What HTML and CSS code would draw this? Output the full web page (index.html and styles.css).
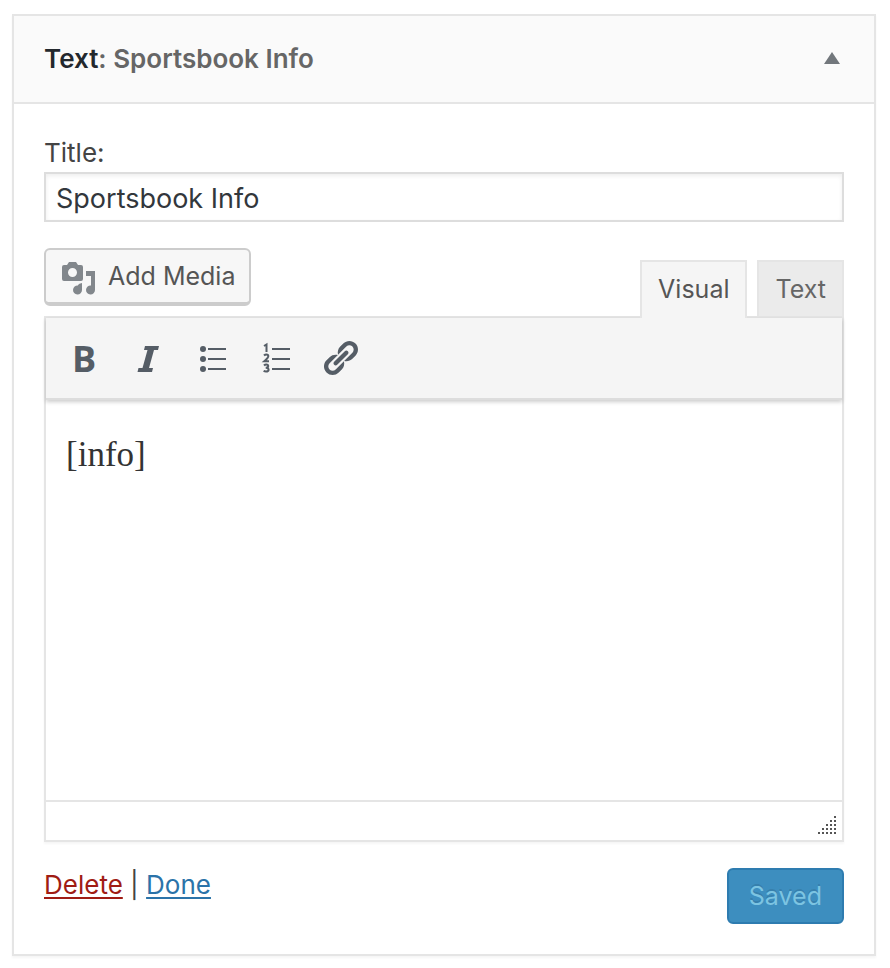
FILE: index.html
```html
<!DOCTYPE html>
<html lang="en">
<head>
<meta charset="utf-8">
<meta name="viewport" content="width=device-width, initial-scale=1">
<title>Text widget</title>
<link rel="stylesheet" href="styles.css">
</head>
<body>
<form class="widget">
  <header class="widget-header">
    <h1 class="widget-title">Text<span class="widget-name">: Sportsbook Info</span></h1>
    <button class="toggle" type="button" aria-label="Collapse widget">
      <svg width="16" height="12" viewBox="0 0 16 12"><path d="M8 0l8 12H0z" fill="currentColor"/></svg>
    </button>
  </header>
  <div class="widget-body">
    <label class="field-label" for="title">Title:</label>
    <input class="field-input" id="title" type="text" value="Sportsbook Info">
    <div class="editor-tools">
      <button class="media-button" type="button">
        <svg width="34" height="40" viewBox="0 -6 34 40" fill="currentColor">
          <path fill-rule="evenodd" d="M2 3h3l2-3h7l2 3h3q2 0 2 2v12q0 2-2 2H2q-2 0-2-2V5q0-2 2-2zM10.500 6a4.500 4.500 0 1 0 0 9 4.500 4.500 0 0 0 0-9z"/>
          <path d="M24 9h9v19a4.500 4.500 0 1 1-4-4.500V14h-5zM16 23q1-1.500 4-2v7a4.500 4.500 0 1 1-4-4.500z"/>
        </svg>
        <span>Add Media</span>
      </button>
      <div class="tabs">
        <button class="tab tab-active" type="button">Visual</button>
        <button class="tab" type="button">Text</button>
      </div>
    </div>
    <div class="editor">
      <div class="toolbar">
        <button class="tool tool-bold" type="button" aria-label="Bold">B</button>
        <button class="tool" type="button" aria-label="Italic">
          <svg width="40" height="40" viewBox="0 0 40 40" fill="currentColor">
            <path d="M17 8h14l-1 4h-4l-5 18h4l-1 4H9.500l1-4h4l5-18h-3.500z"/>
          </svg>
        </button>
        <button class="tool" type="button" aria-label="Bulleted list">
          <svg width="40" height="40" viewBox="0 0 40 40" fill="currentColor">
            <circle cx="11" cy="11" r="3"/><circle cx="11" cy="21" r="3"/><circle cx="11" cy="31" r="3"/>
            <path d="M16 10h18v2H16zM16 20h18v2H16zM16 30h18v2H16z"/>
          </svg>
        </button>
        <button class="tool" type="button" aria-label="Numbered list">
          <svg width="40" height="40" viewBox="0 0 40 40" fill="currentColor">
            <path class="list-marks" d="M8 8l2.500-1.500V14M8 17.500q1-1 2.500-1 1.800 0 1.800 1.700 0 1.500-4 5h4.700M8 27.500q1-1 2.300-1 1.900 0 1.900 1.500 0 1.700-2.500 1.800 2.900 0 2.900 1.900 0 1.800-2.600 1.800-1.300 0-2.400-.6"/>
            <path d="M16 10h18v2H16zM16 20h18v2H16zM16 30h18v2H16z"/>
          </svg>
        </button>
        <button class="tool" type="button" aria-label="Insert link">
          <svg width="40" height="40" viewBox="0 0 20 20" fill="currentColor">
            <path d="M17.740 2.760c1.680 1.690 1.680 4.410 0 6.100l-1.530 1.520c-1.120 1.120-2.700 1.470-4.140 1.090l2.620-2.610.76-.77.76-.76c.84-.84.84-2.200 0-3.040-.84-.85-2.200-.85-3.040 0l-.77.76-3.380 3.380c-.37-1.440-.02-3.020 1.100-4.140l1.520-1.530c1.690-1.680 4.420-1.680 6.100 0zM8.590 13.430l5.340-5.340c.42-.42.42-1.100 0-1.520-.44-.43-1.130-.39-1.530 0l-5.330 5.340c-.42.42-.42 1.100 0 1.520.44.43 1.130.39 1.520 0zm-.76 2.290l4.140-4.150c.38 1.440.03 3.020-1.090 4.140l-1.520 1.530c-1.690 1.680-4.410 1.680-6.100 0-1.680-1.680-1.680-4.420 0-6.100l1.530-1.520c1.120-1.120 2.700-1.470 4.140-1.100l-4.140 4.150c-.85.84-.85 2.200 0 3.050.84.84 2.200.84 3.040 0z"/>
          </svg>
        </button>
      </div>
      <textarea class="content" aria-label="Content">[info]</textarea>
      <div class="statusbar">
        <svg width="18" height="18" viewBox="0 0 18 18" fill="currentColor">
          <path d="M16 0h2v2h-2zM12 4h2v2h-2zM16 4h2v2h-2zM8 8h2v2H8zM12 8h2v2h-2zM16 8h2v2h-2zM4 12h2v2H4zM8 12h2v2H8zM12 12h2v2h-2zM16 12h2v2h-2zM0 16h2v2H0zM4 16h2v2H4zM8 16h2v2H8zM12 16h2v2h-2zM16 16h2v2h-2z"/>
        </svg>
      </div>
    </div>
    <footer class="actions">
      <div class="links"><a class="link-delete" href="#delete">Delete</a> | <a class="link-done" href="#done">Done</a></div>
      <button class="save" type="button" disabled>Saved</button>
    </footer>
  </div>
</form>
</body>
</html>
```
FILE: styles.css
```css
* {
  box-sizing: border-box;
}

body {
  margin: 0;
  padding: 14px 14px 12px 12px;
  background: #fff;
  color: #444;
  font-family: Inter, "Liberation Sans", sans-serif;
  font-size: 26px;
}

button,
input,
textarea {
  margin: 0;
  font: inherit;
}

svg {
  display: block;
}

.widget {
  border: 2px solid #e5e5e5;
  background: #fff;
  box-shadow: 0 2px 2px rgba(0, 0, 0, 0.04);
}

.widget-header {
  display: flex;
  align-items: center;
  justify-content: space-between;
  height: 88px;
  padding: 0 30px 2px;
  border-bottom: 2px solid #e5e5e5;
  background: #fafafa;
}

.widget-title {
  margin: 0;
  color: #23282d;
  font-size: 26px;
  font-weight: 600;
}

.widget-name {
  color: #666;
}

.toggle {
  padding: 4px;
  border: 0;
  background: none;
  color: #72777c;
}

.widget-body {
  padding: 30px;
}

.field-label {
  display: block;
  line-height: 38px;
}

.field-input {
  display: block;
  width: 100%;
  height: 50px;
  padding: 2px 10px 0;
  border: 2px solid #ddd;
  border-radius: 0;
  background: #fff;
  box-shadow: inset 0 2px 4px rgba(0, 0, 0, 0.07);
  color: #32373c;
  font-size: 27px;
}

.editor-tools {
  display: flex;
  align-items: flex-end;
  justify-content: space-between;
  margin-top: 26px;
}

.media-button,
.tab,
.save {
  font-size: 25px;
}

.media-button {
  display: flex;
  align-items: center;
  gap: 12px;
  height: 58px;
  margin-bottom: 10px;
  padding: 0 14px 0 16px;
  border: 2px solid #ccc;
  border-bottom-width: 4px;
  border-radius: 6px;
  background: #f7f7f7;
  color: #555;
}

.media-button svg {
  color: #82878c;
}

.tabs {
  display: flex;
  gap: 10px;
  padding-top: 12px;
}

.tab {
  height: 56px;
  padding: 0 16px;
  border: 2px solid #e5e5e5;
  border-bottom: 0;
  background: #ebebeb;
  color: #666;
}

.tab-active {
  position: relative;
  z-index: 2;
  height: 58px;
  margin-bottom: -2px;
  padding-bottom: 2px;
  background: #f5f5f5;
  color: #555;
}

.editor {
  border: 2px solid #e5e5e5;
  box-shadow: 0 2px 2px rgba(0, 0, 0, 0.04);
}

.toolbar {
  position: relative;
  display: flex;
  height: 82px;
  padding: 0 6px;
  border-bottom: 2px solid #ddd;
  background: #f5f5f5;
  box-shadow: 0 2px 4px rgba(0, 0, 0, 0.2);
}

.tool {
  display: flex;
  align-items: center;
  justify-content: center;
  width: 64px;
  padding: 0;
  border: 0;
  background: none;
  color: #555d66;
}

.tool-bold {
  padding-top: 2px;
  font: 700 36px/40px "Open Sans", sans-serif;
}

.list-marks {
  fill: none;
  stroke: currentColor;
  stroke-width: 2px;
}

.content {
  display: block;
  width: 100%;
  height: 400px;
  padding: 32px 20px;
  border: 0;
  outline: 0;
  resize: none;
  background: #fff;
  color: #333;
  font: 35px/46px "Liberation Serif", serif;
}

.statusbar {
  display: flex;
  align-items: center;
  justify-content: flex-end;
  height: 40px;
  padding: 8px 6px 0;
  border-top: 2px solid #e5e5e5;
  color: #555;
}

.actions {
  display: flex;
  align-items: flex-start;
  justify-content: space-between;
  margin-top: 26px;
}

.links {
  line-height: 34px;
}

.link-delete,
.link-done {
  text-decoration-thickness: 2px;
  text-underline-offset: 3px;
  text-decoration-skip-ink: none;
}

.link-delete {
  color: #a01c14;
}

.link-done {
  color: #2b73a9;
}

.save {
  height: 56px;
  padding: 0 20px;
  border: 2px solid #2e7cb0;
  border-radius: 6px;
  background: #3d8ebf;
  color: #7cc4e2;
  text-shadow: 0 -2px 0 rgba(0, 0, 0, 0.1);
}
```
